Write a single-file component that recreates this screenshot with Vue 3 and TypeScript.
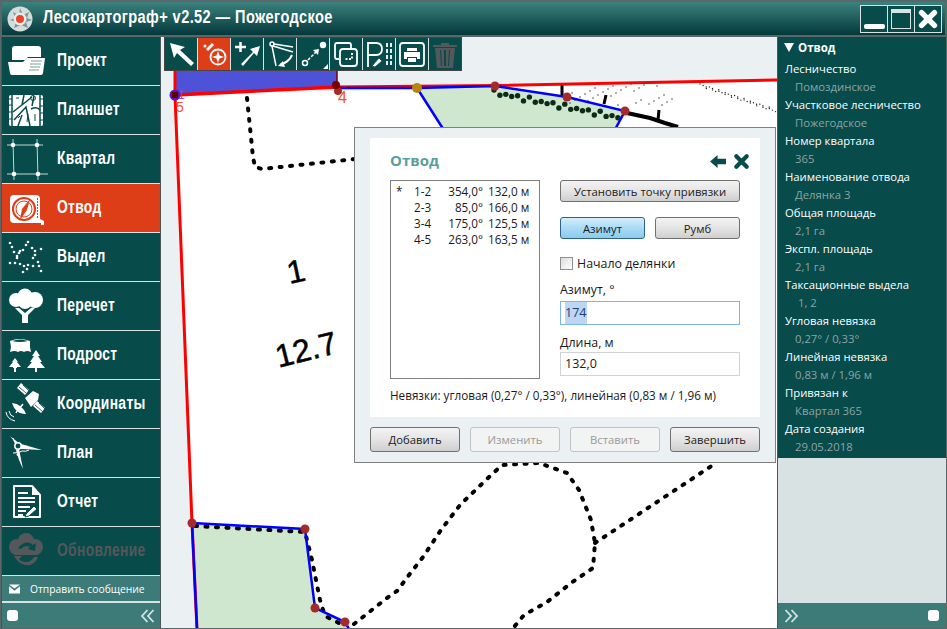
<script setup lang="ts">
interface NavItem {
    key: string;
    label: string;
    active?: boolean;
    disabled?: boolean;
}

const navItems: NavItem[] = [
    { key: 'project', label: 'Проект' },
    { key: 'tablet', label: 'Планшет' },
    { key: 'block', label: 'Квартал' },
    { key: 'plot', label: 'Отвод', active: true },
    { key: 'stand', label: 'Выдел' },
    { key: 'tree', label: 'Перечет' },
    { key: 'young', label: 'Подрост' },
    { key: 'coords', label: 'Координаты' },
    { key: 'plan', label: 'План' },
    { key: 'report', label: 'Отчет' },
    { key: 'update', label: 'Обновление', disabled: true },
];

const standDots: [number, number][] = [
    [6, 10], [8, 14], [10, 19], [13, 23], [15, 20], [19, 17], [22, 12], [24, 9], [28, 15], [31, 18],
    [37, 16], [31, 22], [29, 25], [34, 29], [35, 33], [37, 38], [29, 33], [24, 32], [20, 33], [19, 39],
    [23, 36], [16, 31], [11, 30], [6, 30], [13, 25], [16, 18],
];

const legs = [
    { no: '1-2', az: '354,0°', len: '132,0 м', mark: '*' },
    { no: '2-3', az: '85,0°', len: '166,0 м', mark: '' },
    { no: '3-4', az: '175,0°', len: '125,5 м', mark: '' },
    { no: '4-5', az: '263,0°', len: '163,5 м', mark: '' },
];

const props = [
    { name: 'Лесничество', value: 'Помоздинское' },
    { name: 'Участковое лесничество', value: 'Пожегодское' },
    { name: 'Номер квартала', value: '365' },
    { name: 'Наименование отвода', value: 'Делянка 3' },
    { name: 'Общая площадь', value: '2,1 га' },
    { name: 'Экспл. площадь', value: '2,1 га' },
    { name: 'Таксационные выдела', value: '1, 2', extra: true },
    { name: 'Угловая невязка', value: '0,27° / 0,33°' },
    { name: 'Линейная невязка', value: '0,83 м / 1,96 м' },
    { name: 'Привязан к', value: 'Квартал 365' },
    { name: 'Дата создания', value: '29.05.2018' },
];

const redPoints: [number, number][] = [
    [495, 86], [567, 97], [625, 111], [192, 523], [305, 529], [315, 608], [345, 622],
];

// scanned forest line: blobs under the plot edge
const edgeDots: [number, number][] = [];
for (let i = 0; i < 22; i++) {
    const x = 494 + i * 5.9;
    const y = 90 + (x - 494) * 0.2 + (i % 2) * 3 + (i % 3);
    edgeDots.push([x, y]);
}
// speckles of the scan
const noise: [number, number][] = [];
for (let i = 0; i < 36; i++) {
    noise.push([700 + i * 2.1 + (i % 3), 84 + i * 0.72 + (i % 4) * 0.8]);
}
for (let i = 0; i < 34; i++) {
    noise.push([565 + ((i * 23) % 110), 84 + ((i * 17) % 22)]);
}
</script>

<template>
    <div class="window">
        <header class="titlebar">
            <svg class="logo" viewBox="0 0 26 26">
                <circle cx="13" cy="13" r="12.500" fill="#d5dcdc" />
                <path d="M13 2l3 7 6-3-2 6 5 2-6 2 2 6-7-3-7 3 2-6-6-2 5-2-2-6 6 3z" fill="#7f9795" />
                <circle cx="13" cy="13" r="6.500" fill="#e6ecec" />
                <circle cx="13" cy="13" r="4" fill="#e8452a" />
            </svg>
            <div class="app-title">Лесокартограф+ v2.52 — Пожегодское</div>
            <div class="win-buttons">
                <div class="win-btn"><span class="win-min"></span></div>
                <div class="win-btn"><span class="win-max"></span></div>
                <div class="win-btn">
                    <svg viewBox="0 0 24 24" width="22" height="22"><path d="M5 5l14 14M19 5L5 19" stroke="#fff" stroke-width="6" stroke-linecap="round" /></svg>
                </div>
            </div>
        </header>

        <div class="body">
            <aside class="sidebar">
                <nav class="nav">
                    <div
                        v-for="item in navItems"
                        :key="item.key"
                        class="nav-item"
                        :class="{ active: item.active, disabled: item.disabled }"
                    >
                        <svg class="nav-icon" viewBox="0 0 48 48">
                            <g v-if="item.key === 'project'" fill="#fff">
                                <path d="M8 20v-8q0-3 3-3h23q3 0 3 3v8H24l-3 3H8z" />
                                <path d="M4 25h15l4-4h18l-2 15q-.3 2-2 2H8q-2 0-2-2z" />
                                <path d="M27 24h11M26 27h11M26 30h10M25 33h10" stroke="#7f9d9c" stroke-width="1.200" />
                            </g>
                            <g v-else-if="item.key === 'tablet'">
                                <rect x="5" y="9" width="34" height="31" rx="2" fill="#fff" />
                                <path d="M8 8v33M36 8v33" stroke="#074b4b" stroke-width="1.500" />
                                <path d="M5 13h3M5 19h3M5 26h3M5 33h3M36 13h3M36 20h3M36 27h3M36 34h3" stroke="#074b4b" />
                                <path d="M9 26L28 11M10 34L22 21 26 40M20 9l-2 10M27 23q6-3 9 1M14 40l4-11M30 10l-2 10" stroke="#074b4b" stroke-width="1.500" fill="none" />
                                <path d="M12 12h3M24 28l-1 8M31 28v7M14 32l2-2" stroke="#074b4b" stroke-width="1" />
                                <circle cx="29" cy="12" r="2.500" fill="none" stroke="#074b4b" />
                            </g>
                            <g v-else-if="item.key === 'block'" fill="#fff">
                                <path d="M3 10h36M9 4l1 41M33 4l1 41M3 39h41" stroke="#c6d4d4" stroke-width="1" fill="none" />
                                <circle cx="9" cy="10" r="2.300" />
                                <circle cx="33" cy="10" r="2.300" />
                                <circle cx="10" cy="39" r="2.300" />
                                <circle cx="34" cy="39" r="2.300" />
                            </g>
                            <g v-else-if="item.key === 'plot'">
                                <path d="M10 11h22q4 0 4 4v20l4 2v4h-3v-2H10q-4 0-4-4V15q0-4 4-4z" fill="#fff" />
                                <circle cx="20" cy="25" r="11" fill="none" stroke="#dd3e17" stroke-width="2" />
                                <circle cx="20" cy="25" r="8" fill="none" stroke="#dd3e17" stroke-width="1" />
                                <path d="M26 15l-3 11-7 10 2-11z" fill="#dd3e17" />
                                <path d="M33.500 14v20" stroke="#dd3e17" stroke-width="1" stroke-dasharray="2 1" />
                            </g>
                            <g v-else-if="item.key === 'stand'" fill="#fff">
                                <circle v-for="(d, i) in standDots" :key="i" :cx="d[0]" :cy="d[1]" r="1.300" />
                            </g>
                            <g v-else-if="item.key === 'tree'" fill="#fff">
                                <circle cx="21" cy="14" r="7.500" />
                                <circle cx="12" cy="18" r="7" />
                                <circle cx="31" cy="18" r="8" />
                                <circle cx="21" cy="20" r="7" />
                                <path d="M11 26h4l6 5 6-5h4l-7 7v8h-6v-8z" />
                            </g>
                            <g v-else-if="item.key === 'young'" fill="#fff">
                                <path d="M6 10q9-4 20 0l0 6 1 5q-4-2-7 0-3-2-6 0-3-2-8 0l1-5z" />
                                <path d="M8 10q8-3 16 0-8 2-16 0" fill="#074b4b" />
                                <path d="M11 27l3 4h-1l4 5h-4v1h-1v4h-2v-4h-1v-1H5l4-5H8z" />
                                <path d="M32 19l4 6h-2l4 6h-2l5 6h-8v4h-2v-4h-8l5-6h-2l4-6h-2z" />
                            </g>
                            <g v-else-if="item.key === 'coords'" fill="#fff">
                                <path d="M17 3l8 7-4 5-8-7zM33 21l8 7-4 5-8-7z" />
                                <path d="M15 7l7 6M19 5l6 6M31 25l7 6M35 23l6 6" stroke="#074b4b" stroke-width=".8" />
                                <path d="M21 18l8-7 6 3-1 6-7 7z" />
                                <path d="M8 23q10 1 14 11-10 1-14-11z" />
                                <path d="M15 29l4-5M13 31l-1 2" stroke="#fff" stroke-width="1.500" />
                                <path d="M2 32q1 7 9 9M5 31q1 5 5 6" stroke="#fff" fill="none" />
                            </g>
                            <g v-else-if="item.key === 'plan'" fill="#fff">
                                <path d="M6 7l10 8-2 2z" />
                                <circle cx="14" cy="17" r="3.200" fill="#074b4b" stroke="#fff" stroke-width="1.500" />
                                <path d="M17 15l21 6-21-1zM12 21l3-1 4 20-4-9z" />
                                <path d="M9 24q7 0 9-2M18 22q4 1 7-1M9 9l2 5" stroke="#fff" fill="none" />
                                <path d="M13 25l2 2M22 17l2 2" stroke="#fff" stroke-width="2" />
                            </g>
                            <g v-else-if="item.key === 'report'">
                                <path d="M10 8h18l8 9v22H10z" fill="#074b4b" stroke="#fff" stroke-width="2" stroke-linejoin="round" />
                                <path d="M28 8v9h8z" fill="#fff" />
                                <path d="M14 15h10M14 20h17M14 24h17M14 29h12M14 33h8M14 37h5" stroke="#fff" stroke-width="2" />
                                <path d="M22 36l8-8 3 3-8 7-4 1z" fill="#fff" stroke="#074b4b" />
                            </g>
                            <g v-else-if="item.key === 'update'" fill="#54585a">
                                <circle cx="22" cy="14" r="8" />
                                <circle cx="13" cy="20" r="8" />
                                <circle cx="31" cy="20" r="8" />
                                <rect x="10" y="18" width="24" height="10" />
                                <path d="M14 21q8-9 15-3l3-2-1 8-7-2 2-2q-5-3-9 2z" fill="#074b4b" />
                                <path d="M10 29l2 3q5 7 14 6 6-2 8-8l-4 0q-3 5-8 5-5 0-7-3l3-3z" />
                            </g>
                        </svg>
                        <span class="nav-label">{{ item.label }}</span>
                    </div>
                </nav>
                <div class="message-row">
                    <svg class="envelope" viewBox="0 0 12 10">
                        <path d="M0 0h12L6 4.500z" fill="#fff" />
                        <path d="M0 2l6 5 6-5v8H0z" fill="#fff" />
                    </svg>
                    <span>Отправить сообщение</span>
                </div>
                <div class="side-bottom">
                    <span class="pin"></span>
                    <svg class="chevrons" viewBox="0 0 14 14">
                        <path d="M7 1L1.500 7 7 13M13 1L7.500 7 13 13" fill="none" stroke="#d7e4e4" stroke-width="1.800" />
                    </svg>
                </div>
            </aside>

            <main class="map">
                <svg class="map-canvas" viewBox="161 37 616 591" preserveAspectRatio="none">
                    <path d="M175 95L778 80V629H197z" fill="#fff" />
                    <path d="M175 70h162v17L175 95z" fill="#4e52d8" />
                    <path d="M417 88L495 86 567 97 625 111 612 135H447z" fill="#cfe6cf" />
                    <path d="M192 523L305 529 315 608 345 622 349 629H197z" fill="#cfe6cf" />

                    <g fill="none" stroke="#000" stroke-width="4" stroke-linecap="round" stroke-dasharray="2 8.500">
                        <path d="M247 98L253 157 255 167 262 169 355 159" />
                        <path d="M354 624L387 598 397 591 409 575 423 557 441 530 460 505 488 478 502 465 539 463 567 473 579 490 591 520 595 543 593 568 571 583 547 602 524 615 514 627" />
                        <path d="M595 543L713 465" />
                        <path d="M195 526L305 532 312 560 320 600 325 616 345 626" />
                    </g>
                    <circle v-for="(d, i) in edgeDots" :key="'e' + i" :cx="d[0]" :cy="d[1]" r="2.700" fill="#0c2a18" />
                    <circle v-for="(d, i) in noise" :key="'n' + i" :cx="d[0]" :cy="d[1]" r=".7" fill="#222" />
                    <path d="M627 113L650 118 665 123 678 127" fill="none" stroke="#000" stroke-width="4" />
                    <path d="M562 85v10M606 95l-2 9M659 110l-1 10" fill="none" stroke="#000" stroke-width="3" />

                    <path d="M175 95L337 87" fill="none" stroke="#f00" stroke-width="3.500" />
                    <path d="M337 87L495 85.500 778 80" fill="none" stroke="#f00" stroke-width="3" />
                    <path d="M175 95L192 523 197 629" fill="none" stroke="#f00" stroke-width="3" />
                    <path d="M175 70V95" fill="none" stroke="#f00" stroke-width="3" />
                    <path d="M337 70V87" fill="none" stroke="#7a0000" stroke-width="1.500" />

                    <path d="M338 88L417 88 495 86 567 97 625 111 612 135M417 88L447 135" fill="none" stroke="#00f" stroke-width="2.500" />
                    <path d="M192 523L305 529 315 608 345 622 349 629M192 523L197 629" fill="none" stroke="#00f" stroke-width="2.500" />

                    <circle v-for="(p, i) in redPoints" :key="'p' + i" :cx="p[0]" :cy="p[1]" r="4.500" fill="#a52a2a" />
                    <circle cx="417" cy="88" r="5" fill="#b8860b" />
                    <circle cx="338" cy="91" r="4" fill="#a52a2a" />
                    <circle cx="336" cy="85" r="4" fill="#7a0000" />
                    <circle cx="175" cy="95" r="5.500" fill="#5a16b8" />
                    <rect x="172" y="92" width="6" height="6" fill="#5c0000" />

                    <text x="178" y="99" class="pt-label purple">1</text>
                    <text x="176" y="112" class="pt-label">5</text>
                    <text x="338" y="103" class="pt-label big">4</text>

                    <text x="287" y="283" class="hand-text" transform="rotate(-12 293 272)">1</text>
                    <text x="274" y="361" class="hand-text" transform="rotate(-14 304 346)">12.7</text>
                </svg>

                <div class="toolbar">
                    <div class="tool">
                        <svg viewBox="0 0 32 32"><path d="M5 5l15 4-5 3 14 13-3 3-14-13-3 5z" fill="#fff" /></svg>
                    </div>
                    <div class="tool on">
                        <svg viewBox="0 0 32 32">
                            <path d="M8 11l6-6 2 2-6 6z" fill="#fff" />
                            <circle cx="7" cy="8" r="1.500" fill="#fff" />
                            <circle cx="20" cy="19" r="7.500" fill="none" stroke="#fff" stroke-width="1.800" />
                            <path d="M20 13l1.500 4.500L26 19l-4.500 1.500L20 25l-1.500-4.500L14 19l4.500-1.500z" fill="#fff" />
                        </svg>
                    </div>
                    <div class="tool">
                        <svg viewBox="0 0 32 32">
                            <path d="M4 9h11M9.500 4v10" stroke="#fff" stroke-width="2.500" />
                            <path d="M10 26l12-12-3-3 10-3-3 10-3-3-11 13z" fill="#fff" />
                        </svg>
                    </div>
                    <div class="tool">
                        <svg viewBox="0 0 32 32" fill="none" stroke="#fff" stroke-width="1.500">
                            <circle cx="8" cy="6" r="2" />
                            <path d="M10 6l19 3M9 8l20 6M8 8l4 20" />
                            <path d="M28 17q-3 7-12 10" stroke-width="2" />
                            <path d="M19 23l-5 5 7 1z" fill="#fff" stroke="none" />
                        </svg>
                    </div>
                    <div class="tool">
                        <svg viewBox="0 0 32 32">
                            <circle cx="8" cy="25" r="2.500" fill="none" stroke="#fff" stroke-width="1.500" />
                            <circle cx="26" cy="7" r="3.200" fill="#fff" />
                            <path d="M11 22l8-8" stroke="#fff" stroke-width="1.500" stroke-dasharray="3 1.500" />
                            <path d="M22 11l-6 1 5 5z" fill="#fff" />
                            <path d="M31 26v5h-5z" fill="#fff" />
                        </svg>
                    </div>
                    <div class="tool">
                        <svg viewBox="0 0 32 32" fill="none" stroke="#fff" stroke-width="1.800">
                            <path d="M9 21H7q-2 0-2-2V7q0-2 2-2h12q2 0 2 2v3" />
                            <rect x="10" y="11" width="17" height="17" rx="3" />
                            <path d="M22 15v6h-7" stroke-dasharray="2 1.500" />
                        </svg>
                    </div>
                    <div class="tool">
                        <svg viewBox="0 0 32 32" fill="none" stroke="#fff" stroke-width="1.800">
                            <path d="M5 29V5h8q6 0 6 6 0 6-6 6H5" />
                            <path d="M24 5v24M28 5v24" stroke-dasharray="4 2" />
                            <path d="M9 28l7-8 3 3-7 6z" fill="#fff" stroke="#074b4b" stroke-width=".8" />
                        </svg>
                    </div>
                    <div class="tool">
                        <svg viewBox="0 0 32 32">
                            <rect x="4" y="5" width="24" height="23" rx="3" fill="none" stroke="#fff" stroke-width="1.800" />
                            <path d="M11 10h10v3H11zM8 14h16v7h-3v-2H11v2H8zM12 20h8v4h-8z" fill="#fff" />
                        </svg>
                    </div>
                    <div class="tool">
                        <svg viewBox="0 0 32 32" fill="#54585a">
                            <path d="M4 7h24v2H4zM12 5h8v2h-8z" />
                            <path d="M6 10h20l-2 20H8zM11 12l1 16h1l-1-16zM15 12v16h2V12zM20 12l-1 16h1l1-16z" fill-rule="evenodd" />
                        </svg>
                    </div>
                </div>

                <section class="dialog">
                    <div class="dialog-inner">
                        <div class="dialog-head">
                            <h2 class="dialog-title">Отвод</h2>
                            <div class="dialog-tools">
                                <svg viewBox="0 0 18 16" width="17" height="15"><path d="M8 1v4h9v6H8v4L0 8z" fill="#074b4b" /></svg>
                                <svg viewBox="0 0 18 18" width="17" height="17"><path d="M3.500 3.500l11 11M14.500 3.500l-11 11" stroke="#074b4b" stroke-width="4.500" stroke-linecap="round" /></svg>
                            </div>
                        </div>
                        <div class="dialog-cols">
                            <div class="leg-list">
                                <div v-for="leg in legs" :key="leg.no" class="leg">
                                    <span class="leg-mark">{{ leg.mark }}</span>
                                    <span class="leg-no">{{ leg.no }}</span>
                                    <span class="leg-az">{{ leg.az }}</span>
                                    <span class="leg-len">{{ leg.len }}</span>
                                </div>
                            </div>
                            <div class="form">
                                <button class="btn wide">Установить точку привязки</button>
                                <div class="btn-pair">
                                    <button class="btn selected">Азимут</button>
                                    <button class="btn">Румб</button>
                                </div>
                                <label class="check"><span class="check-box"></span>Начало делянки</label>
                                <div class="field-label first">Азимут, °</div>
                                <div class="input focus"><span class="sel">174</span></div>
                                <div class="field-label second">Длина, м</div>
                                <div class="input last">132,0</div>
                            </div>
                        </div>
                        <p class="errors">Невязки: угловая (0,27° / 0,33°), линейная (0,83 м / 1,96 м)</p>
                    </div>
                    <div class="dialog-actions">
                        <button class="btn">Добавить</button>
                        <button class="btn off">Изменить</button>
                        <button class="btn off">Вставить</button>
                        <button class="btn">Завершить</button>
                    </div>
                </section>
            </main>

            <aside class="details">
                <div class="details-panel">
                    <div class="details-head"><span class="tri"></span>Отвод</div>
                    <div v-for="p in props" :key="p.name" class="prop">
                        <div class="prop-name">{{ p.name }}</div>
                        <div class="prop-value" :class="{ extra: p.extra }">{{ p.value }}</div>
                    </div>
                </div>
                <div class="details-empty"></div>
                <div class="details-bottom">
                    <svg class="chevrons" viewBox="0 0 14 14">
                        <path d="M1 1l5.500 6L1 13M7 1l5.500 6L7 13" fill="none" stroke="#d7e4e4" stroke-width="1.800" />
                    </svg>
                    <span class="pin"></span>
                </div>
            </aside>
        </div>
    </div>
</template>

<style scoped>
    .window {
        width: 947px;
        height: 629px;
        display: flex;
        flex-direction: column;
        box-sizing: border-box;
        background: #5a6668;
        padding: 1px;
        overflow: hidden;
        font-family: "Open Sans", "Noto Sans", sans-serif;
        font-size: 11.700px;
    }

    .titlebar {
        height: 33px;
        flex: none;
        display: flex;
        align-items: center;
        margin: 1px 1px 2px;
        padding-left: 5px;
        box-sizing: border-box;
        background: linear-gradient(#3b827e, #04383a);
    }

    .logo {
        width: 26px;
        height: 26px;
        flex: none;
    }

    .app-title {
        margin: -2px 0 0 10px;
        color: #fff;
        font-family: "Liberation Sans", sans-serif;
        font-weight: 700;
        font-size: 18px;
        letter-spacing: .5px;
        white-space: nowrap;
        transform: scaleX(.81);
        transform-origin: left center;
    }

    .win-buttons {
        margin-left: auto;
        margin-right: 3px;
        display: flex;
        border: 1px solid #d7e4e4;
        background: #074b4b;
    }

    .win-btn {
        width: 26px;
        height: 26px;
        display: flex;
        align-items: center;
        justify-content: center;
        border-left: 1px solid #d7e4e4;
    }

    .win-btn:first-child {
        border-left: 0;
    }

    .win-min {
        width: 21px;
        height: 5px;
        margin-top: 16px;
        background: #fff;
        border-radius: 2px;
    }

    .win-max {
        width: 20px;
        height: 20px;
        border: 1px solid #d7e4e4;
        border-top: 4px solid #d7e4e4;
        box-sizing: border-box;
    }

    .body {
        flex: 1;
        display: flex;
        min-height: 0;
        background: #4a5658;
        gap: 1px;
    }

    .sidebar {
        width: 158px;
        flex: none;
        margin-left: 1px;
        display: flex;
        flex-direction: column;
        background: #d8e2e3;
    }

    .nav {
        display: flex;
        flex-direction: column;
    }

    .nav-item {
        height: 48px;
        margin-bottom: 1px;
        display: flex;
        align-items: center;
        background: #074b4b;
        color: #fff;
        box-sizing: border-box;
        padding-left: 2px;
        font-family: "Liberation Sans", sans-serif;
        font-weight: 700;
        font-size: 18px;
        letter-spacing: .4px;
    }

    .nav-item.active {
        background: #dd3e17;
    }

    .nav-item.disabled {
        color: #54585a;
    }

    .nav-icon {
        width: 48px;
        height: 48px;
        flex: none;
    }

    .nav-label {
        margin: -2px 0 0 5px;
        white-space: nowrap;
        transform: scaleX(.77);
        transform-origin: left center;
    }

    .message-row {
        height: 25px;
        display: flex;
        align-items: center;
        background: #3c7b78;
        color: #fff;
        font-size: 10.300px;
        padding-left: 7px;
    }

    .envelope {
        width: 11px;
        height: 10px;
        margin-right: 10px;
    }

    .side-bottom {
        margin-top: 2px;
        height: 25px;
        display: flex;
        align-items: center;
        justify-content: space-between;
        background: #3c7b78;
        padding: 0 5px;
    }

    .pin {
        width: 11px;
        height: 11px;
        border-radius: 3px;
        background: #fff;
    }

    .chevrons {
        width: 15px;
        height: 14px;
    }

    .map {
        position: relative;
        flex: 1;
        background: #ebf0f3;
        overflow: hidden;
    }

    .map-canvas {
        position: absolute;
        inset: 0;
        width: 100%;
        height: 100%;
    }

    .pt-label {
        font-family: "Liberation Sans", sans-serif;
        font-size: 14px;
        fill: #f2501e;
    }

    .pt-label.big {
        font-size: 16px;
    }

    .pt-label.purple {
        font-size: 12px;
        fill: #a04ad0;
    }

    .hand-text {
        font-family: "Liberation Sans", sans-serif;
        font-size: 32px;
        fill: #000;
        stroke: #000;
        stroke-width: .5px;
    }

    .toolbar {
        position: absolute;
        left: 3px;
        top: 0;
        display: flex;
        border: 1px solid #444;
        background: #d8e2e3;
        gap: 1px;
    }

    .tool {
        width: 32px;
        height: 32px;
        background: #074b4b;
    }

    .tool.on {
        background: #dd3e17;
    }

    .tool svg {
        display: block;
        width: 32px;
        height: 32px;
    }

    .dialog {
        position: absolute;
        left: 193px;
        top: 90px;
        width: 422px;
        height: 336px;
        box-sizing: border-box;
        border: 1px solid #808080;
        background: #ebf0f3;
        padding: 10px 15px;
        display: flex;
        flex-direction: column;
        color: #1a1a1a;
    }

    .dialog-inner {
        background: #fff;
        height: 279px;
        box-sizing: border-box;
        padding: 11px 20px 0;
        flex: none;
    }

    .dialog-head {
        display: flex;
        justify-content: space-between;
        align-items: center;
        height: 24px;
        margin-bottom: 7px;
    }

    .dialog-title {
        margin: 0;
        font-size: 15px;
        font-weight: 700;
        color: #5d9e9a;
        position: relative;
        top: -1px;
    }

    .dialog-tools {
        display: flex;
        align-items: center;
        gap: 6px;
        margin-right: -10px;
    }

    .dialog-cols {
        display: flex;
        gap: 20px;
    }

    .leg-list {
        width: 150px;
        height: 199px;
        box-sizing: border-box;
        border: 1px solid #808080;
        padding: 2px 0 0 5px;
    }

    .leg {
        display: flex;
        height: 16px;
        line-height: 16px;
        white-space: nowrap;
    }

    .leg-mark {
        width: 18px;
    }

    .leg-no {
        width: 24px;
    }

    .leg-az {
        width: 45px;
        text-align: right;
    }

    .leg-len {
        margin-left: 5px;
    }

    .form {
        width: 180px;
        display: flex;
        flex-direction: column;
    }

    .btn {
        height: 22px;
        padding: 0;
        font: inherit;
        font-size: 11.300px;
        color: #1a1a1a;
        background: linear-gradient(#f3f3f3, #e6e6e6 45%, #cfcfcf);
        border: 1px solid #707070;
        border-radius: 3px;
    }

    .btn-pair {
        margin-top: 15px;
        display: flex;
        justify-content: space-between;
    }

    .btn-pair .btn {
        width: 85px;
    }

    .btn.selected {
        background: linear-gradient(#d6eefb, #a9daf5 50%, #8ccbec);
        border-color: #2c628b;
    }

    .btn.off {
        color: #9a9a9a;
        background: #f2f3f3;
        border-color: #c0c4c4;
    }

    .check {
        margin-top: 16px;
        display: flex;
        align-items: center;
        gap: 4px;
        height: 16px;
        font-size: 12.400px;
    }

    .check-box {
        width: 11px;
        height: 11px;
        border: 1px solid #8e8f8f;
        background: linear-gradient(135deg, #dcdcdc, #fff);
    }

    .field-label {
        height: 16px;
        line-height: 16px;
        font-size: 12.400px;
    }

    .field-label.first {
        margin-top: 11px;
    }

    .field-label.second {
        margin-top: 10px;
    }

    .input {
        margin-top: 3px;
        height: 24px;
        line-height: 22px;
        box-sizing: border-box;
        border: 1px solid #d0d3d5;
        padding-left: 4px;
        font-size: 12.500px;
    }

    .input.last {
        margin-top: 1px;
    }

    .input.focus {
        border-color: #7eb4ea;
    }

    .sel {
        display: inline-block;
        background: #bcd6f3;
        color: #1c3d78;
        padding-right: 1px;
    }

    .errors {
        margin: 8px 0 0;
        line-height: 16px;
        white-space: nowrap;
    }

    .dialog-actions {
        margin-top: 10px;
        display: flex;
        justify-content: space-between;
    }

    .dialog-actions .btn {
        width: 90px;
        height: 25px;
    }

    .details {
        width: 168px;
        flex: none;
        display: flex;
        flex-direction: column;
        color: #fff;
    }

    .details-panel {
        background: #074b4b;
        height: 421px;
        padding: 1px 7px;
        box-sizing: border-box;
        font-size: 11.300px;
    }

    .details-head {
        display: flex;
        align-items: center;
        font-weight: 700;
        font-size: 11.500px;
        height: 18px;
        margin-bottom: 4px;
        margin-left: -1px;
    }

    .tri {
        width: 0;
        height: 0;
        border-left: 5px solid transparent;
        border-right: 5px solid transparent;
        border-top: 9px solid #fff;
        margin-right: 4px;
    }

    .prop-name,
    .prop-value {
        height: 18px;
        line-height: 18px;
        white-space: nowrap;
    }

    .prop-value {
        padding-left: 10px;
        color: #8fa3a3;
    }

    .prop-value.extra {
        padding-left: 13px;
    }

    .details-empty {
        flex: 1;
        background: #d8e2e3;
    }

    .details-bottom {
        height: 25px;
        display: flex;
        align-items: center;
        justify-content: space-between;
        background: #3c7b78;
        padding: 0 7px 0 6px;
    }
</style>

<style>
    html, body {
        margin: 0;
    }
</style>
